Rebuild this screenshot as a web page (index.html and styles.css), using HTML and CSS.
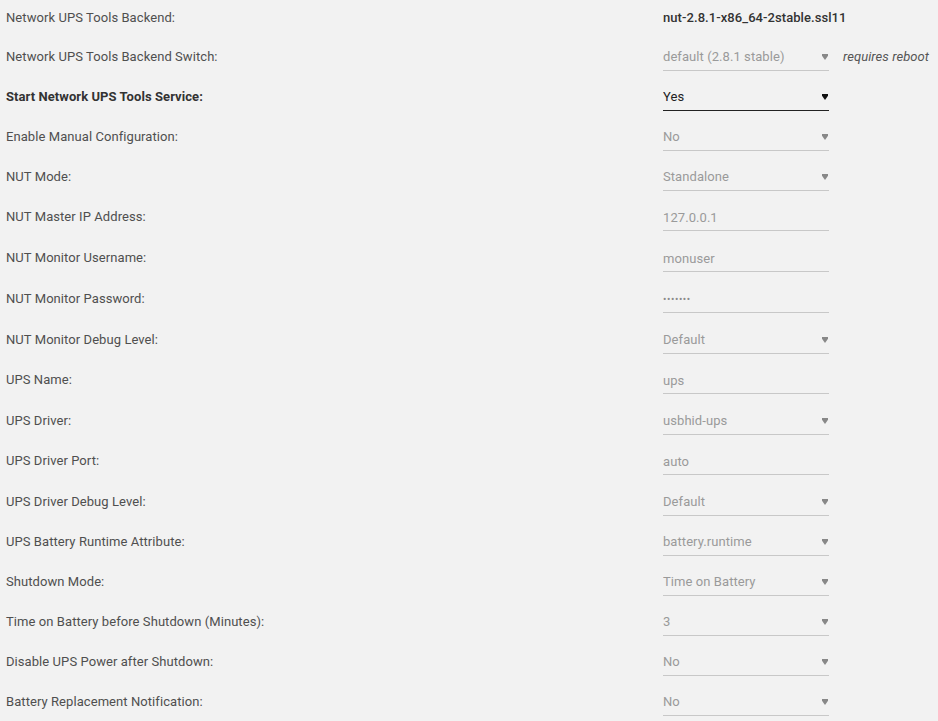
FILE: index.html
```html
<!DOCTYPE html>
<html lang="en">
<head>
    <meta charset="UTF-8">
    <title>UPS Settings</title>
    <link rel="stylesheet" href="styles.css">
</head>
<body>
    <form class="settings">
        <div class="row row-first">
            <span class="label">Network UPS Tools Backend:</span>
            <span class="static">nut-2.8.1-x86_64-2stable.ssl11</span>
        </div>

        <div class="row">
            <span class="label">Network UPS Tools Backend Switch:</span>
            <span class="select-wrap">
                <select disabled><option>default (2.8.1 stable)</option></select>
            </span>
            <span class="note">requires reboot</span>
        </div>

        <div class="row">
            <span class="label label-strong">Start Network UPS Tools Service:</span>
            <span class="select-wrap active">
                <select><option>Yes</option><option>No</option></select>
            </span>
        </div>

        <div class="row">
            <span class="label">Enable Manual Configuration:</span>
            <span class="select-wrap">
                <select disabled><option>No</option></select>
            </span>
        </div>

        <div class="row">
            <span class="label">NUT Mode:</span>
            <span class="select-wrap">
                <select disabled><option>Standalone</option></select>
            </span>
        </div>

        <div class="row row-text">
            <span class="label">NUT Master IP Address:</span>
            <input type="text" value="127.0.0.1" disabled>
        </div>

        <div class="row row-text">
            <span class="label">NUT Monitor Username:</span>
            <input type="text" value="monuser" disabled>
        </div>

        <div class="row row-text">
            <span class="label">NUT Monitor Password:</span>
            <input type="password" class="password" value="monpass" disabled>
        </div>

        <div class="row">
            <span class="label">NUT Monitor Debug Level:</span>
            <span class="select-wrap">
                <select disabled><option>Default</option></select>
            </span>
        </div>

        <div class="row row-text">
            <span class="label">UPS Name:</span>
            <input type="text" value="ups" disabled>
        </div>

        <div class="row">
            <span class="label">UPS Driver:</span>
            <span class="select-wrap">
                <select disabled><option>usbhid-ups</option></select>
            </span>
        </div>

        <div class="row row-text">
            <span class="label">UPS Driver Port:</span>
            <input type="text" value="auto" disabled>
        </div>

        <div class="row">
            <span class="label">UPS Driver Debug Level:</span>
            <span class="select-wrap">
                <select disabled><option>Default</option></select>
            </span>
        </div>

        <div class="row">
            <span class="label">UPS Battery Runtime Attribute:</span>
            <span class="select-wrap">
                <select disabled><option>battery.runtime</option></select>
            </span>
        </div>

        <div class="row">
            <span class="label">Shutdown Mode:</span>
            <span class="select-wrap">
                <select disabled><option>Time on Battery</option></select>
            </span>
        </div>

        <div class="row">
            <span class="label">Time on Battery before Shutdown (Minutes):</span>
            <span class="select-wrap">
                <select disabled><option>3</option></select>
            </span>
        </div>

        <div class="row">
            <span class="label">Disable UPS Power after Shutdown:</span>
            <span class="select-wrap">
                <select disabled><option>No</option></select>
            </span>
        </div>

        <div class="row">
            <span class="label">Battery Replacement Notification:</span>
            <span class="select-wrap">
                <select disabled><option>No</option></select>
            </span>
        </div>
    </form>
</body>
</html>
```

FILE: styles.css
```css
:root {
    --bg-color: #f2f2f2;
    --label-color: #4f4f4f;
    --strong-color: #333;
    --muted-color: #9a9a9a;
    --line-color: #c8c8c8;
    --active-color: #222;
}

* {
    margin: 0;
    padding: 0;
    box-sizing: border-box;
}

body {
    font-family: Roboto, "Liberation Sans", sans-serif;
    font-size: 13px;
    letter-spacing: 0.07px;
    background-color: var(--bg-color);
    color: var(--label-color);
}

.settings {
    padding: 2px 0 0 6px;
}

.row {
    display: grid;
    grid-template-columns: 657px 166px auto;
    align-items: start;
    height: 40px;
}

.row-first {
    height: 39px;
}

.row-text {
    height: 41px;
}

.label,
.static,
.note {
    padding-top: 3px;
    line-height: 26px;
    white-space: nowrap;
}

.label-strong {
    color: var(--strong-color);
    font-weight: bold;
}

.static {
    grid-column: 2 / 4;
    color: var(--strong-color);
    font-weight: 500;
}

.note {
    padding-left: 14px;
    font-style: italic;
    color: #555;
}

select,
input {
    -webkit-appearance: none;
    appearance: none;
    display: block;
    width: 166px;
    height: 30px;
    padding: 3px 0 0 0;
    line-height: 26px;
    font-family: inherit;
    font-size: 13px;
    letter-spacing: inherit;
    color: var(--muted-color);
    background: transparent;
    border: none;
    border-bottom: 1px solid var(--line-color);
    border-radius: 0;
    outline: none;
    opacity: 1;
}

.password {
    font-size: 10px;
    letter-spacing: 0.6px;
    color: #8a8a8a;
}

/* select arrow */
.select-wrap {
    position: relative;
    display: block;
}

.select-wrap::after {
    content: "";
    position: absolute;
    right: 1px;
    top: 13px;
    width: 6px;
    height: 6px;
    background-color: #888;
    clip-path: polygon(0 0, 100% 0, 100% 30%, 50% 100%, 0 30%);
    pointer-events: none;
}

.select-wrap.active select {
    color: var(--active-color);
    border-bottom: 1px solid var(--active-color);
}

.select-wrap.active::after {
    background-color: #111;
}
```
